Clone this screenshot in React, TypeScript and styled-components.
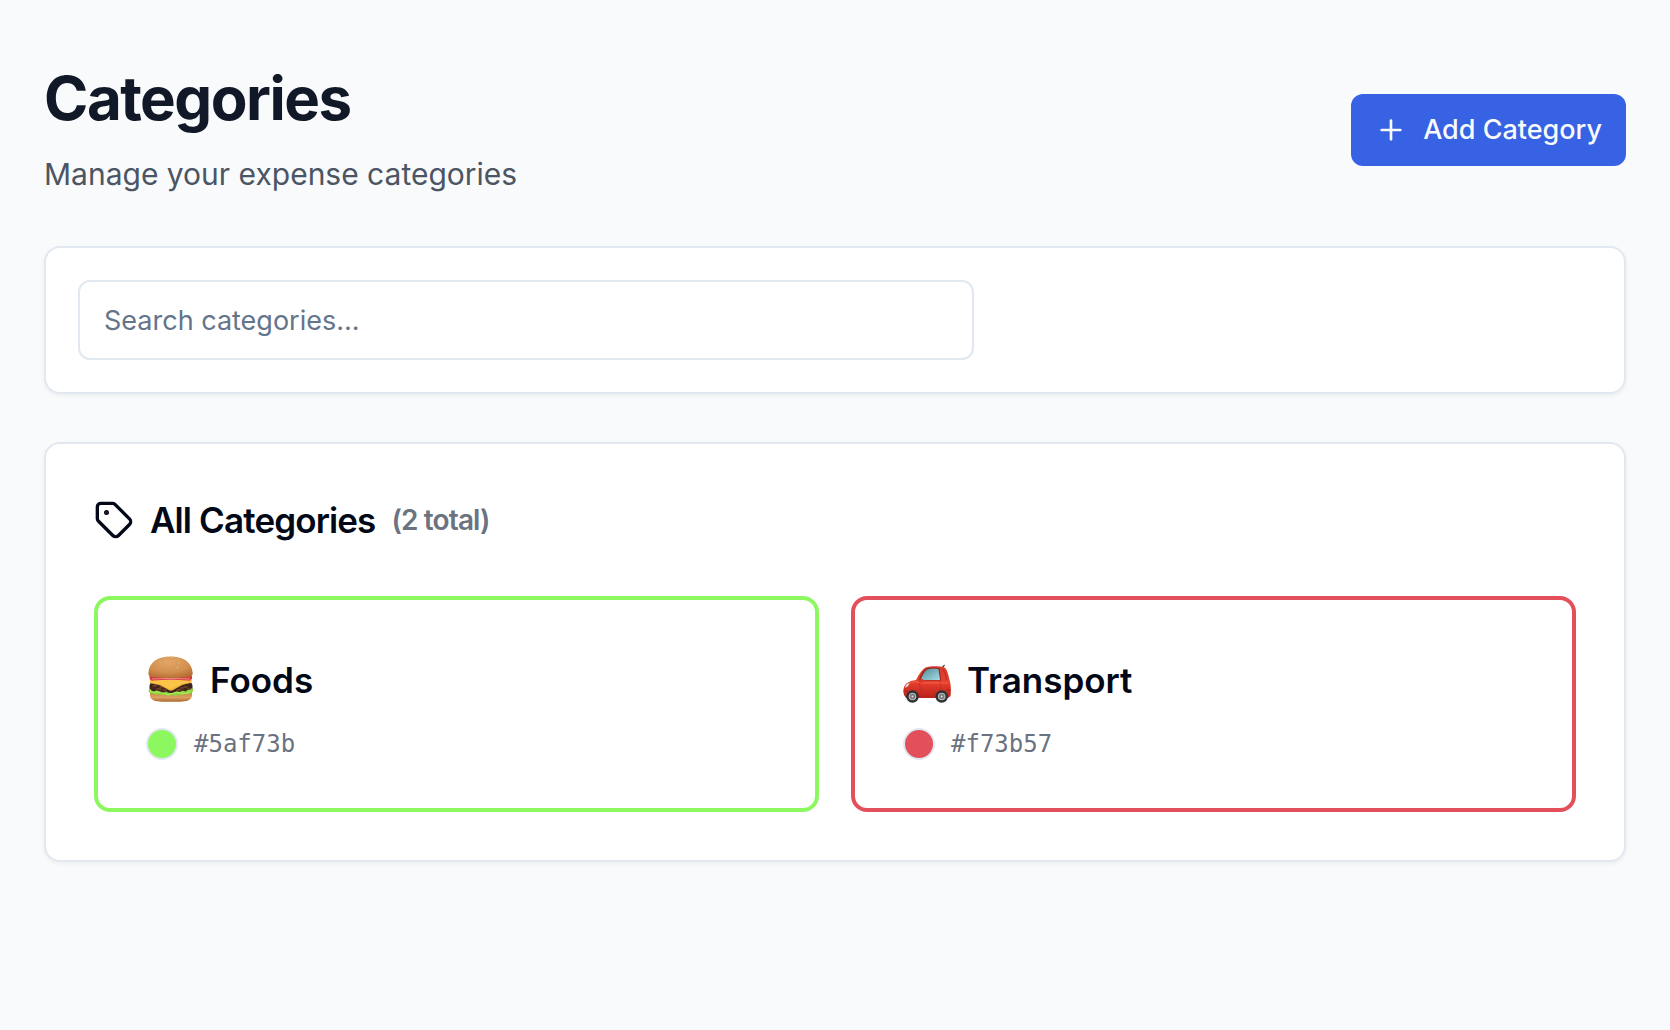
import React, { useState } from "react";
import styled, { createGlobalStyle } from "styled-components";
import { Plus, Tag } from "lucide-react";

const GlobalStyle = createGlobalStyle`
  *, *::before, *::after { box-sizing: border-box; }
  body {
    margin: 0;
    background: #f9fafc;
    color: #020817;
    font-family: Inter, "Liberation Sans", sans-serif;
  }
  h1, h2, h3, p, ul { margin: 0; padding: 0; }
`;

const Page = styled.main`
  display: flex;
  flex-direction: column;
  gap: 48px;
  padding: 62px 44px;
`;

const Header = styled.header`
  display: flex;
  align-items: center;
  justify-content: space-between;
  gap: 32px;
`;

const Heading = styled.div`
  display: flex;
  flex-direction: column;
  gap: 16px;
`;

const Title = styled.h1`
  color: #111827;
  font-size: 60px;
  line-height: 72px;
  font-weight: 700;
  letter-spacing: -0.025em;
`;

const Subtitle = styled.p`
  color: #4b5563;
  font-size: 30px;
  line-height: 48px;
`;

const AddButton = styled.button`
  display: inline-flex;
  align-items: center;
  gap: 16px;
  height: 72px;
  padding: 0 24px;
  border: 0;
  border-radius: 12px;
  background: #3662e3;
  color: #f8fafc;
  font: 500 27px/40px Inter, "Liberation Sans", sans-serif;
  white-space: nowrap;
  cursor: pointer;
`;

const Card = styled.section<{ $padding: number }>`
  padding: ${(p) => p.$padding}px;
  border: 2px solid #e2e8f0;
  border-radius: 16px;
  background: #fff;
  box-shadow: 0 2px 4px rgba(0, 0, 0, 0.05);
`;

const SearchInput = styled.input`
  display: block;
  width: 100%;
  max-width: 896px;
  height: 80px;
  padding: 0 24px;
  border: 2px solid #e2e8f0;
  border-radius: 12px;
  background: #fff;
  color: #020817;
  font: 400 27px/40px Inter, "Liberation Sans", sans-serif;
  &::placeholder { color: #64748b; opacity: 1; }
`;

const SectionTitle = styled.h2`
  display: flex;
  align-items: center;
  gap: 16px;
  margin-bottom: 48px;
  font-size: 35px;
  line-height: 56px;
  font-weight: 600;
  letter-spacing: -0.025em;
`;

const Total = styled.span`
  color: #6b7280;
  font-size: 28px;
  line-height: 40px;
`;

const Grid = styled.ul`
  display: grid;
  grid-template-columns: repeat(2, minmax(0, 1fr));
  gap: 32px;
  list-style: none;
`;

const CategoryCard = styled.li<{ $color: string }>`
  display: flex;
  flex-direction: column;
  gap: 16px;
  padding: 48px;
  border: 4px solid ${(p) => p.$color};
  border-radius: 16px;
`;

const CategoryHead = styled.div`
  display: flex;
  align-items: center;
  gap: 16px;
  height: 64px;
`;

const CategoryName = styled.h3`
  font-size: 35px;
  line-height: 56px;
  font-weight: 600;
`;

const ColorRow = styled.div`
  display: flex;
  align-items: center;
  gap: 16px;
  height: 32px;
`;

const Swatch = styled.span<{ $color: string }>`
  width: 32px;
  height: 32px;
  border: 2px solid #e2e8f0;
  border-radius: 50%;
  background: ${(p) => p.$color};
`;

const ColorCode = styled.code`
  color: #6b7280;
  font: 400 24px/32px "DejaVu Sans Mono", monospace;
`;

function Burger() {
  return (
    <svg width="48" height="48" viewBox="0 0 48 48" role="img" aria-label="Hamburger">
      <defs>
        <radialGradient id="bun" cx="0.45" cy="0.25" r="0.8">
          <stop offset="0" stopColor="#e3a666" />
          <stop offset="0.6" stopColor="#d2904f" />
          <stop offset="1" stopColor="#b56a30" />
        </radialGradient>
        <linearGradient id="heel" x1="0" y1="0" x2="0" y2="1">
          <stop offset="0" stopColor="#c47c3d" />
          <stop offset="0.6" stopColor="#dda063" />
          <stop offset="1" stopColor="#ad6830" />
        </linearGradient>
      </defs>
      <path d="M4 35H46V39C46 44 41 45.7 34 45.7H16C9 45.7 4 44 4 39Z" fill="url(#heel)" />
      <rect x="3.5" y="25.5" width="43" height="11.5" rx="4.5" fill="#40231a" />
      <path d="M7 30H10M11 33H15M17 34H20M31 34H35M38 31H41M42 33H44M35 32H37M14 31H16" stroke="#75452d" strokeWidth="1.4" strokeLinecap="round" />
      <path d="M2.6 34Q4 32 5.5 34.5Q8 36.5 10 34.5Q12 34 14 36Q17 37.5 20 35.5Q24 38 28 36.5Q31 35 34 36Q37 34 39.5 35.5Q42 33 44 34Q46 31 47 33.5Q47.5 36 45 37Q42 39.5 39 37.5Q36 40 33 38.5Q29 41 26 38.5Q22 41 19 38.5Q15 40 12 38Q9 39.5 7 37.5Q3 38 2.6 34Z" fill="#8cd83c" />
      <path d="M4 35Q8 37 11 36T18 37.5T26 37.5T35 37T45 35" fill="none" stroke="#bdf06c" strokeWidth="0.8" />
      <path d="M4 24H46L45.5 26.5L37 28.5L27 34Q25 35 23 34L14 29L4 27Z" fill="#fbc449" />
      <path d="M5 27L14 29L24 34L36 28.5L45 26.5" fill="none" stroke="#e7a12c" strokeWidth="0.6" />
      <path d="M3.5 20H46L46 22.8Q45 25 42 24.6Q25 22.8 7 24.6Q3 25 3.5 20Z" fill="#d53c42" />
      <path d="M6 23Q24 21.8 44 23" fill="none" stroke="#f59a90" strokeWidth="0.8" />
      <path d="M2.4 17C3 6 12 0.6 24.5 0.6S46 6 46.7 17C46.8 20.5 44 21 40 21.3C31 22.2 18 22.2 9 21.3C4.5 21 2.2 20.5 2.4 17Z" fill="url(#bun)" />
      <g fill="#f7dcab" stroke="#a96b34" strokeWidth="0.3">
        <ellipse cx="19" cy="2" rx="1.3" ry="0.7" />
        <ellipse cx="26" cy="1.5" rx="1.3" ry="0.7" />
        <ellipse cx="32" cy="3" rx="1.2" ry="0.7" transform="rotate(20 32 3)" />
        <ellipse cx="14" cy="6.5" rx="0.7" ry="1.2" transform="rotate(35 14 6.5)" />
        <ellipse cx="23.5" cy="8" rx="0.7" ry="1.2" />
        <ellipse cx="24.5" cy="4" rx="1.2" ry="0.6" />
        <ellipse cx="33" cy="7" rx="0.7" ry="1.2" transform="rotate(-20 33 7)" />
        <ellipse cx="31.5" cy="11.5" rx="0.7" ry="1.2" transform="rotate(-15 31.5 11.5)" />
      </g>
    </svg>
  );
}

function Car() {
  return (
    <svg width="48" height="48" viewBox="0 0 48 48" role="img" aria-label="Car">
      <defs>
        <linearGradient id="paint" x1="0" y1="0" x2="0" y2="1">
          <stop offset="0" stopColor="#d83c2b" />
          <stop offset="0.5" stopColor="#e8402e" />
          <stop offset="1" stopColor="#b92018" />
        </linearGradient>
        <linearGradient id="glass" x1="0" y1="0" x2="1" y2="1">
          <stop offset="0" stopColor="#528795" />
          <stop offset="1" stopColor="#a6dce7" />
        </linearGradient>
      </defs>
      <path d="M39 12L41.2 9.3" stroke="#47353a" strokeWidth="1.2" strokeLinecap="round" />
      <path d="M1 39C0 36 0 31 3 28C6 25 10 24.5 13 24C16 18 19 13.5 23 11.3C27 9.8 36 9.8 41 11.2C44 12.5 45.5 19 46.5 24C48 28 48.2 35 47.5 40L45 42H3Z" fill="url(#paint)" />
      <path d="M15.5 24.5C18 18 21 13 25 12Q31 11 36.5 12L38 24.5Z" fill="#8e251f" />
      <path d="M17.5 24C20 18 22 14 25.5 13Q31 12.2 35.5 13L37 24Z" fill="url(#glass)" />
      <path d="M39 13Q43 16 43.5 24" fill="none" stroke="#a32620" strokeWidth="0.8" />
      <path d="M37 24L38 33Q36 39 32 40H19L16 25" fill="none" stroke="#b52b22" strokeWidth="0.6" />
      <path d="M6 27Q13 24.5 20 27H45" fill="none" stroke="#f5684e" strokeWidth="0.8" />
      <ellipse cx="18.2" cy="24.7" rx="2.4" ry="2" fill="#d63626" />
      <path d="M1.8 31Q2.7 27 6.8 26.5Q6.5 30.5 2.5 32Z" fill="#f3e4df" stroke="#b64237" strokeWidth="0.6" />
      <path d="M0.5 35H5M43 34H47.7" stroke="#a91d19" strokeWidth="0.8" />
      {[9.5, 38.7].map((x) => (
        <g key={x}>
          <circle cx={x} cy="40.5" r="6.2" fill="#303135" />
          <circle cx={x} cy="40.5" r="3.8" fill="#b7b8b9" />
          <circle cx={x} cy="40.5" r="2.7" fill="#77797b" />
          <circle cx={x} cy="40.5" r="1" fill="#dedfdf" />
        </g>
      ))}
    </svg>
  );
}

const categories = [
  { name: "Foods", code: "#5af73b", color: "#8cf75f", Icon: Burger },
  { name: "Transport", code: "#f73b57", color: "#e44f5c", Icon: Car },
];

export default function App() {
  const [query, setQuery] = useState("");
  const visible = categories.filter((c) =>
    c.name.toLowerCase().includes(query.trim().toLowerCase())
  );

  return (
    <>
      <GlobalStyle />
      <Page>
        <Header>
          <Heading>
            <Title>Categories</Title>
            <Subtitle>Manage your expense categories</Subtitle>
          </Heading>
          <AddButton type="button">
            <Plus size={32} aria-hidden="true" />
            Add Category
          </AddButton>
        </Header>
        <Card $padding={32}>
          <SearchInput
            type="text"
            aria-label="Search categories"
            placeholder="Search categories..."
            value={query}
            onChange={(e) => setQuery(e.target.value)}
          />
        </Card>
        <Card $padding={48}>
          <SectionTitle>
            <Tag size={40} aria-hidden="true" />
            All Categories
            <Total>({categories.length} total)</Total>
          </SectionTitle>
          <Grid>
            {visible.map(({ name, code, color, Icon }) => (
              <CategoryCard key={name} $color={color}>
                <CategoryHead>
                  <Icon />
                  <CategoryName>{name}</CategoryName>
                </CategoryHead>
                <ColorRow>
                  <Swatch $color={color} />
                  <ColorCode>{code}</ColorCode>
                </ColorRow>
              </CategoryCard>
            ))}
          </Grid>
        </Card>
      </Page>
    </>
  );
}
